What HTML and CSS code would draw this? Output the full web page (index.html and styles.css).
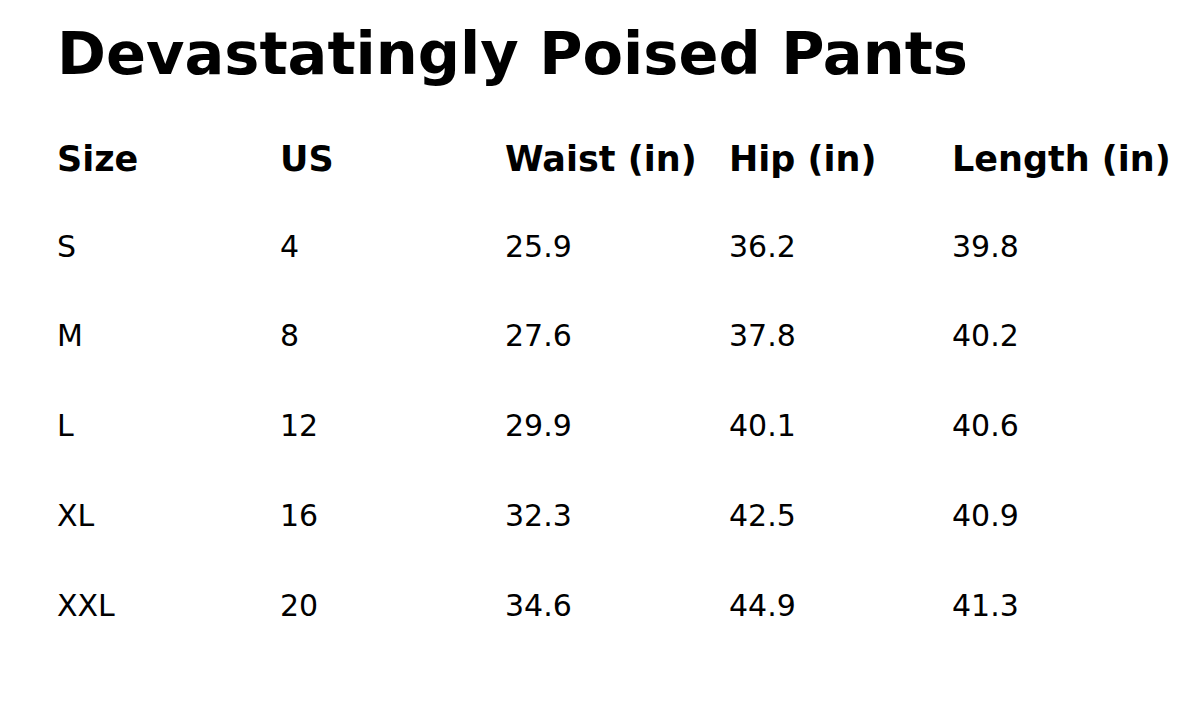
FILE: index.html
```html
<!DOCTYPE html>
<html>
<head>
<meta charset="utf-8">
<link rel="stylesheet" href="styles.css">
</head>
<body>
<main class="page">
  <h1 class="title">Devastatingly Poised Pants</h1>
  <div class="chart">
    <div class="cell head">Size</div>
    <div class="cell head">US</div>
    <div class="cell head">Waist (in)</div>
    <div class="cell head">Hip (in)</div>
    <div class="cell head">Length (in)</div>

    <div class="cell">S</div><div class="cell">4</div><div class="cell">25.9</div><div class="cell">36.2</div><div class="cell">39.8</div>
    <div class="cell">M</div><div class="cell">8</div><div class="cell">27.6</div><div class="cell">37.8</div><div class="cell">40.2</div>
    <div class="cell">L</div><div class="cell">12</div><div class="cell">29.9</div><div class="cell">40.1</div><div class="cell">40.6</div>
    <div class="cell">XL</div><div class="cell">16</div><div class="cell">32.3</div><div class="cell">42.5</div><div class="cell">40.9</div>
    <div class="cell">XXL</div><div class="cell">20</div><div class="cell">34.6</div><div class="cell">44.9</div><div class="cell">41.3</div>
  </div>
</main>
</body>
</html>
```

FILE: styles.css
```css
html, body {
  margin: 0;
  padding: 0;
  background: #ffffff;
}
body {
  font-family: "DejaVu Sans", sans-serif;
  color: #000;
}
.page {
  padding: 14px 0 0 57px;
}
.title {
  margin: 0;
  font-size: 59px;
  font-weight: bold;
  line-height: 80px;
}
.chart {
  margin-top: 44.5px;
  display: grid;
  grid-template-columns: 223px 225px 224px 223px 224px;
  grid-template-rows: 88px repeat(5, 89.75px);
}
.cell {
  font-size: 30px;
  line-height: 40px;
  white-space: nowrap;
}
.head {
  font-size: 35px;
  font-weight: bold;
  line-height: 40px;
}
```
